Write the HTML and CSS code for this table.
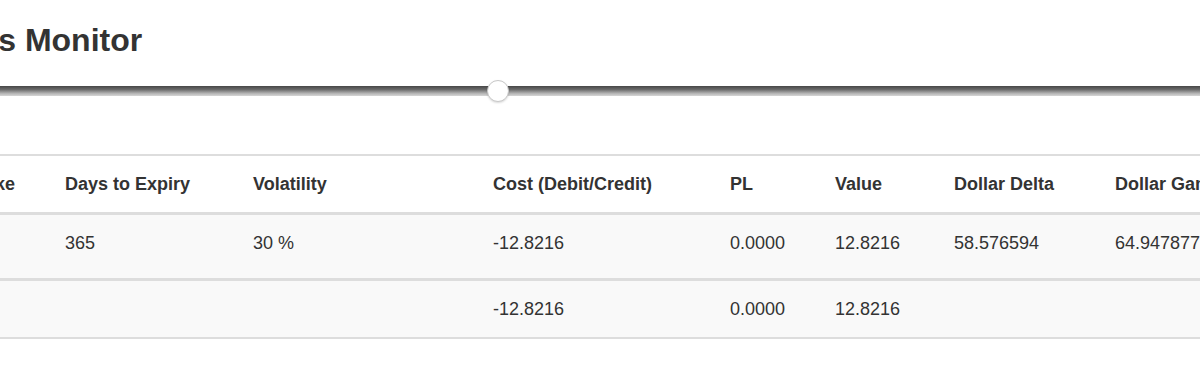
FILE: index.html
```html
<!DOCTYPE html>
<html>
<head>
<meta charset="utf-8">
<link rel="stylesheet" href="styles.css">
</head>
<body>
<div class="page">
  <h1 class="title">Positions Monitor</h1>
  <div class="slider">
    <div class="track"></div>
    <div class="thumb"></div>
  </div>
  <table class="grid">
    <colgroup>
      <col class="c-type"><col class="c-strike"><col class="c-days"><col class="c-vol"><col class="c-cost"><col class="c-pl"><col class="c-value"><col class="c-delta"><col class="c-gamma">
    </colgroup>
    <thead>
      <tr><th>Type</th><th>Strike</th><th>Days to Expiry</th><th>Volatility</th><th>Cost (Debit/Credit)</th><th>PL</th><th>Value</th><th>Dollar Delta</th><th>Dollar Gamma</th></tr>
    </thead>
    <tbody>
      <tr class="row-main"><td>Call</td><td>100</td><td>365</td><td>30 %</td><td>-12.8216</td><td>0.0000</td><td>12.8216</td><td>58.576594</td><td>64.947877</td></tr>
    </tbody>
    <tfoot>
      <tr class="row-total"><td></td><td></td><td></td><td></td><td>-12.8216</td><td>0.0000</td><td>12.8216</td><td></td><td></td></tr>
    </tfoot>
  </table>
</div>
</body>
</html>
```

FILE: styles.css
```css
html, body {
  margin: 0;
  padding: 0;
  background: #fff;
}
body {
  width: 1200px;
  height: 388px;
  overflow: hidden;
  font-family: "Liberation Sans", Arial, sans-serif;
  color: #333;
}
.page {
  width: 1500px;
  margin-left: -128px;
  padding-top: 22px;
}
.title {
  margin: 0;
  font-size: 32px;
  line-height: 36px;
  font-weight: bold;
  color: #333;
  white-space: nowrap;
}
.slider {
  position: relative;
  margin-top: 28px;
  height: 10px;
}
.track {
  height: 10px;
  background: linear-gradient(#474747 0%, #6a6a6a 35%, #b5b5b5 75%, #d6d6d6 100%);
}
.thumb {
  position: absolute;
  left: 615px;
  top: -6px;
  width: 20px;
  height: 20px;
  border-radius: 50%;
  background: #fff;
  border: 1px solid #c8c8c8;
  box-shadow: 0 1px 2px rgba(0,0,0,0.15);
}
.grid {
  margin-top: 58px;
  width: 100%;
  border-collapse: collapse;
  table-layout: fixed;
  font-size: 18px;
  line-height: 24px;
  border-top: 2px solid #ddd;
  border-bottom: 2px solid #ddd;
}
.c-type { width: 83px; }
.c-strike { width: 100px; }
.c-days { width: 188px; }
.c-vol { width: 240px; }
.c-cost { width: 237px; }
.c-pl { width: 105px; }
.c-value { width: 119px; }
.c-delta { width: 161px; }
.grid th, .grid td {
  padding: 16px 10px;
  text-align: left;
  white-space: nowrap;
  vertical-align: top;
}
.grid th {
  font-weight: bold;
  border-bottom: 3px solid #ddd;
}
.grid tbody td, .grid tfoot td {
  background: #f9f9f9;
}
.row-main td {
  padding-bottom: 23px;
}
.row-total td {
  border-top: 3px solid #ddd;
}
```
